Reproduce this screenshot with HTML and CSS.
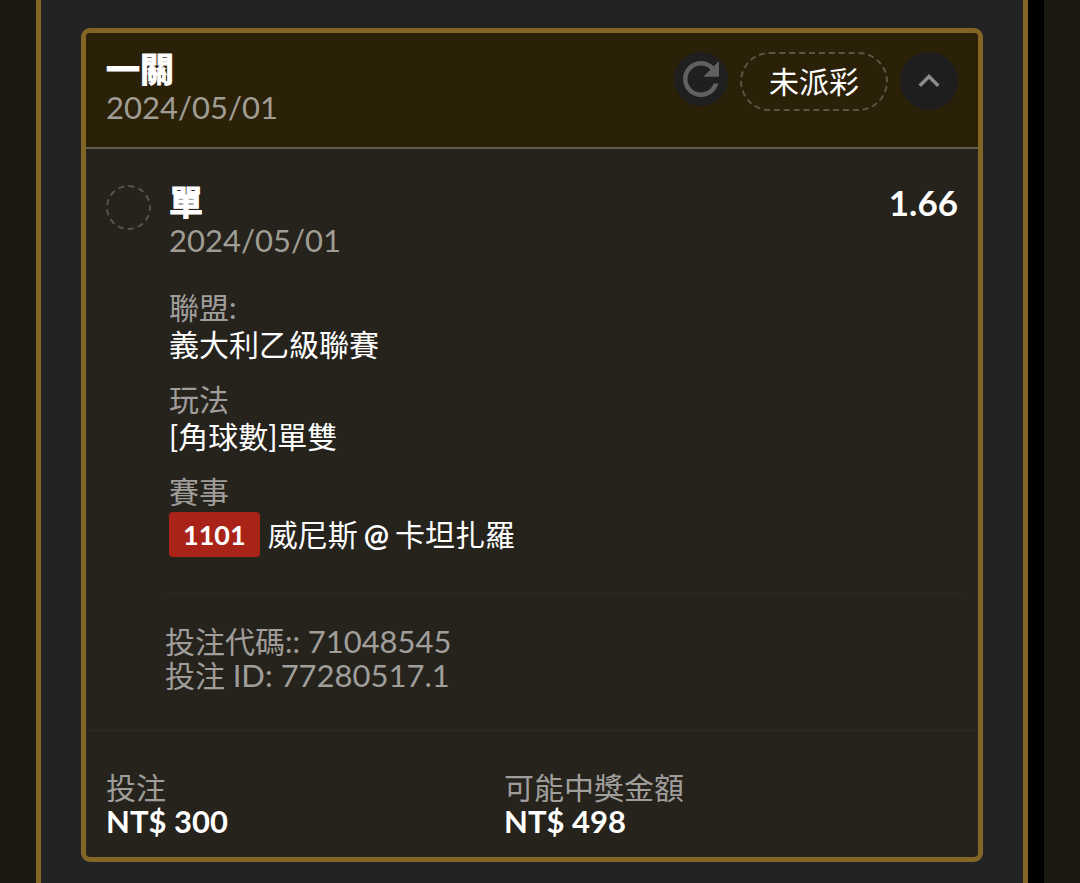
FILE: index.html
```html
<!DOCTYPE html>
<html lang="zh-Hant">
<head>
    <meta charset="UTF-8">
    <meta name="viewport" content="width=device-width, initial-scale=1.0">
    <title>投注</title>
    <link rel="stylesheet" href="styles.css">
</head>
<body>
    <div class="page">
        <main class="panel">
            <article class="card">
                <header class="card-header">
                    <div>
                        <h1 class="title">一關</h1>
                        <p class="date">2024/05/01</p>
                    </div>
                    <div class="actions">
                        <button class="refresh" type="button" aria-label="refresh">
                            <svg viewBox="0 0 24 24" width="54" height="54"><path d="M17.65 6.35C16.2 4.9 14.21 4 12 4c-4.42 0-7.99 3.58-7.99 8s3.57 8 7.99 8c3.73 0 6.84-2.55 7.73-6h-2.08c-.82 2.33-3.04 4-5.65 4-3.31 0-6-2.69-6-6s2.69-6 6-6c1.66 0 3.14.69 4.22 1.78L13 11h7V4l-2.35 2.35z"/></svg>
                        </button>
                        <span class="status">未派彩</span>
                        <button class="toggle" type="button" aria-label="collapse">
                            <svg viewBox="0 0 24 24" width="42" height="42"><path d="M12 8l-6 6 1.41 1.41L12 10.83l4.59 4.58L18 14z"/></svg>
                        </button>
                    </div>
                </header>

                <section class="bet">
                    <span class="mark"></span>
                    <div class="bet-info">
                        <h2 class="title">單</h2>
                        <p class="date">2024/05/01</p>
                        <dl class="details">
                            <div>
                                <dt>聯盟:</dt>
                                <dd>義大利乙級聯賽</dd>
                            </div>
                            <div>
                                <dt>玩法</dt>
                                <dd>[角球數]單雙</dd>
                            </div>
                            <div>
                                <dt>賽事</dt>
                                <dd class="match">
                                    <span class="tag">1101</span>
                                    <span class="teams">威尼斯 <b>@</b> 卡坦扎羅</span>
                                </dd>
                            </div>
                        </dl>
                    </div>
                    <strong class="odds">1.66</strong>
                </section>

                <section class="codes">
                    <p>投注代碼:: <span class="number">71048545</span></p>
                    <p>投注 <span class="number">ID: 77280517.1</span></p>
                </section>

                <dl class="totals">
                    <div>
                        <dt>投注</dt>
                        <dd>NT$ 300</dd>
                    </div>
                    <div>
                        <dt>可能中獎金額</dt>
                        <dd>NT$ 498</dd>
                    </div>
                </dl>
            </article>
        </main>
    </div>
</body>
</html>
```

FILE: styles.css
```css
* {
    margin: 0;
    padding: 0;
    box-sizing: border-box;
}

body {
    font-family: Lato, "Noto Sans CJK TC", sans-serif;
    font-size: 30px;
    color: #ffffff;
    background-color: #1c1912;
}

.page {
    padding: 0 36px;
}

.panel {
    min-height: 100vh;
    margin-right: 16px;
    padding: 28px 40px 21px;
    background-color: #232323;
    border: solid #836626;
    border-width: 0 5px;
    box-shadow: 16px 0 0 #000000;
}

.card {
    background-color: #26231d;
    border: 5px solid #836626;
    border-radius: 9px;
}

.card-header {
    display: flex;
    justify-content: space-between;
    padding: 17px 20px 21px;
    background-color: #2b2108;
    border-bottom: 2px solid #625c4e;
    border-radius: 4px 4px 0 0;
}

.title {
    font-size: 34px;
    line-height: 38px;
    font-weight: 700;
    -webkit-text-stroke: 1px #ffffff;
}

.date {
    font-size: 31px;
    line-height: 38px;
    color: #a09d95;
}

.actions {
    display: flex;
    align-items: flex-start;
    gap: 12px;
    margin-top: 2px;
}

button {
    display: flex;
    align-items: center;
    justify-content: center;
    border: none;
    border-radius: 50%;
    cursor: pointer;
}

.refresh {
    width: 54px;
    height: 54px;
    background-color: #1f1f1f;
    fill: #606060;
}

.toggle {
    width: 58px;
    height: 58px;
    background-color: #1e1e1e;
    fill: #8c8c8c;
}

.status {
    padding: 0 27px;
    line-height: 55px;
    border: 2px dashed #5c5648;
    border-radius: 30px;
}

.bet {
    display: flex;
    gap: 18px;
    padding: 34px 20px 36px;
}

.mark {
    width: 45px;
    height: 45px;
    margin-top: 2px;
    border: 2px dashed #57544f;
    border-radius: 50%;
}

.bet-info {
    flex: 1;
}

.odds {
    font-size: 35px;
    line-height: 38px;
}

.details {
    display: grid;
    gap: 18px;
    margin-top: 30px;
    line-height: 37px;
}

dt {
    color: #a09e9b;
}

.match {
    display: flex;
    align-items: center;
    gap: 8px;
    margin-top: 2px;
}

.tag {
    padding: 0 14px;
    font-size: 27px;
    line-height: 45px;
    font-weight: 700;
    background-color: #a92318;
    border-radius: 4px;
}

.teams {
    display: flex;
    gap: 6px;
}

.codes {
    margin: 0 16px 0 79px;
    padding: 30px 0 38px;
    line-height: 34px;
    color: #a09e9b;
    border-top: 1px solid #2b2925;
}

.number {
    font-size: 31px;
}

.totals {
    display: grid;
    grid-template-columns: 1fr 1fr;
    padding: 39px 76px 19px 20px;
    line-height: 34px;
    border-top: 1px solid #2d2b27;
}

.totals dd {
    font-size: 31px;
    font-weight: 700;
}
```
